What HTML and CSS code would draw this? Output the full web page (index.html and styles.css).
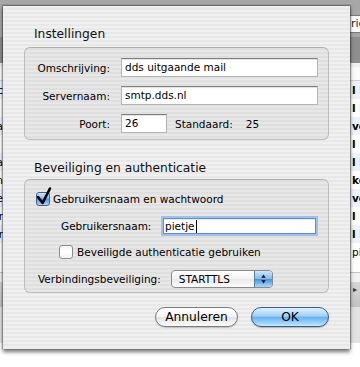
FILE: index.html
```html
<!DOCTYPE html>
<html lang="nl">
<head>
<meta charset="utf-8">
<title>Instellingen</title>
<link rel="stylesheet" href="styles.css">
</head>
<body>
<div class="window">
  <div class="toolbar"><div class="search">ric</div></div>
  <div class="bar-dark"></div>
  <div class="colhead"></div>
  <ul class="list">
    <li class="alt"><span class="lc">c</span><span class="mid"></span><span class="rc b">l L</span></li>
    <li><span class="lc"></span><span class="mid"></span><span class="rc b">l L</span></li>
    <li class="alt"><span class="lc">a</span><span class="mid"></span><span class="rc b">ve</span></li>
    <li><span class="lc"></span><span class="mid"></span><span class="rc b">l L</span></li>
    <li class="alt"><span class="lc">a</span><span class="mid"></span><span class="rc b">l L</span></li>
    <li><span class="lc">n</span><span class="mid"></span><span class="rc b">ke</span></li>
    <li class="alt"><span class="lc">e</span><span class="mid"></span><span class="rc b">ve</span></li>
    <li><span class="lc">r</span><span class="mid"></span><span class="rc b">l L</span></li>
    <li class="alt"><span class="lc">r</span><span class="mid"></span><span class="rc b">l L</span></li>
    <li><span class="lc"></span><span class="mid"></span><span class="rc">pi</span></li>
  </ul>
  <div class="listend"></div>
  <div class="statusbar"><span class="tri">&#9656;</span></div>
  <div class="bottom"></div>
</div>

<div class="sheet">
  <h2 class="heading first">Instellingen</h2>
  <div class="group g1">
    <div class="row"><label class="lbl">Omschrijving:</label><div class="field wide">dds uitgaande mail</div></div>
    <div class="row"><label class="lbl">Servernaam:</label><div class="field wide">smtp.dds.nl</div></div>
    <div class="row"><label class="lbl">Poort:</label><div class="field port">26</div><span class="std">Standaard:</span><span class="stdv">25</span></div>
  </div>

  <h2 class="heading second">Beveiliging en authenticatie</h2>
  <div class="group g2">
    <div class="check-row">
      <svg class="cb" width="14" height="14" viewBox="0 0 14 14" overflow="visible">
        <defs>
          <linearGradient id="cbg" x1="0" y1="0" x2="0" y2="1">
            <stop offset="0" stop-color="#d3e9fc"/>
            <stop offset=".45" stop-color="#86bdf0"/>
            <stop offset=".5" stop-color="#4f95e0"/>
            <stop offset="1" stop-color="#b2ddfc"/>
          </linearGradient>
        </defs>
        <rect x=".5" y=".5" width="13" height="13" rx="2.5" fill="url(#cbg)" stroke="#42638f"/>
        <path d="M2 5 L6.6 11 L14 -3.5" fill="none" stroke="#000" stroke-width="2.6" stroke-linecap="round" stroke-linejoin="round"/>
      </svg>
      <span>Gebruikersnaam en wachtwoord</span>
    </div>
    <div class="user-row"><label>Gebruikersnaam:</label><div class="field focus">pietje<span class="caret"></span></div></div>
    <div class="check-row sub">
      <svg class="cb" width="14" height="14" viewBox="0 0 14 14">
        <defs>
          <linearGradient id="cbw" x1="0" y1="0" x2="0" y2="1">
            <stop offset="0" stop-color="#f4f4f4"/>
            <stop offset=".5" stop-color="#ffffff"/>
            <stop offset="1" stop-color="#f2f2f2"/>
          </linearGradient>
        </defs>
        <rect x=".5" y=".5" width="13" height="13" rx="2.5" fill="url(#cbw)" stroke="#8c8c8c"/>
      </svg>
      <span>Beveiligde authenticatie gebruiken</span>
    </div>
    <div class="conn-row">
      <label>Verbindingsbeveiliging:</label>
      <div class="popup">
        <span class="ptext">STARTTLS</span>
        <svg class="arrows" width="18" height="18" viewBox="0 0 18 18">
          <polygon points="9,4 11.5,7.5 6.5,7.5" fill="#111"/>
          <polygon points="9,14 11.5,10.5 6.5,10.5" fill="#111"/>
        </svg>
      </div>
    </div>
  </div>

  <div class="buttons">
    <button class="btn cancel">Annuleren</button>
    <button class="btn ok">OK</button>
  </div>
</div>
</body>
</html>
```
FILE: styles.css
```css
* { box-sizing: border-box; margin: 0; padding: 0; }
html, body { width: 360px; height: 367px; overflow: hidden; background: #fff; }
body {
  position: relative;
  font-family: "DejaVu Sans", "Liberation Sans", sans-serif;
  font-size: 10.5px;
  color: #000;
}

/* background window */
.window { display: flex; flex-direction: column; height: 367px; }
.toolbar {
  height: 37px;
  background: #a7a7a7;
  display: flex;
  justify-content: flex-end;
  padding-top: 15px;
}
.search {
  width: 40px; height: 18px;
  background: #fff;
  border: 1px solid #7a7a7a; border-right: 0;
  padding-left: 30px;
  font-size: 11px; line-height: 16px;
  overflow: hidden; white-space: nowrap;
  color: #222;
}
.bar-dark { height: 26px; background: #8e8e8e; }
.colhead { height: 18px; background: #fbfbfb; border-top: 4px solid #f0f0f0; border-bottom: 1px solid #d2d2d2; }
.list { list-style: none; }
.list li {
  height: 18px;
  display: grid;
  grid-template-columns: 3px 1fr 8px;
  background: #fff;
  line-height: 18px;
  font-size: 10.5px;
  white-space: nowrap;
  overflow: hidden;
}
.list li.alt { background: #edf3fe; }
.lc { overflow: hidden; direction: rtl; }
.rc { overflow: hidden; }
.rc.b { font-weight: bold; }
.listend { height: 12px; background: #fff; border-bottom: 1px solid #c4c4c4; }
.statusbar {
  height: 34px;
  background: linear-gradient(#d6d6d6, #c2c2c2);
  border-top: 9px solid #f2f2f2;
  display: flex; justify-content: flex-end;
  padding-right: 3px;
  font-size: 8px; line-height: 16px; color: #333;
}
.bottom { height: 36px; background: #e2e2e2; }

/* sheet */
.sheet {
  position: absolute;
  left: 3px; top: 5px;
  width: 347px; height: 344px;
  padding: 21px 21px 0;
  border-top: 1px solid #6e6e6e;
  background: repeating-linear-gradient(#f0f0f0 0 2px, #e8e8e8 2px 4px);
  box-shadow: 0 3px 4px rgba(0,0,0,.55), -1px 0 1px rgba(0,0,0,.25), 1px 0 1px rgba(0,0,0,.25);
  display: flex;
  flex-direction: column;
}
.heading {
  font-size: 12.25px;
  line-height: 15px;
  font-weight: normal;
  margin-left: 10px;
  color: #111;
}
.heading.first { margin-bottom: 5px; }
.heading.second { margin-top: 21px; margin-bottom: 3px; }

.group {
  border: 1px solid #bcbcbc;
  border-top-color: #b0b0b0;
  border-radius: 6px;
  background: rgba(0,0,0,.035);
}
.g1 {
  padding: 10px 10px 6px 0;
  display: flex; flex-direction: column; gap: 9px;
}
.g1 .row { display: flex; align-items: center; height: 19px; }
.g1 .lbl { width: 85px; text-align: right; margin-right: 11px; }

.field {
  height: 19px;
  background: #fff;
  border: 1px solid #b4b4b4;
  border-top-color: #7e7e7e;
  box-shadow: inset 0 1px 1px rgba(0,0,0,.12);
  padding-left: 3px;
  line-height: 17px;
  white-space: nowrap;
}
.field.wide { flex: 1; }
.field.port { width: 46px; }
.std { margin-left: 8px; }
.stdv { margin-left: 13px; }

.g2 {
  padding: 12px 10px 4px 0;
  display: flex; flex-direction: column;
}
.check-row {
  display: flex; align-items: center;
  height: 14px;
  gap: 3px;
  padding-left: 11px;
  line-height: 14px;
}
.check-row.sub { padding-left: 34px; margin-top: 9px; gap: 4px; }
.cb { flex: none; display: block; }

.user-row {
  margin-top: 10px;
  height: 20px;
  display: flex; align-items: center;
  padding-left: 36px;
}
.field.focus {
  margin-left: auto;
  margin-right: 2px;
  width: 153px;
  height: 16px;
  line-height: 14px;
  border: 1px solid #5f8fcc;
  box-shadow: 0 0 0 2px #9fc2ec, inset 0 1px 1px rgba(0,0,0,.1);
  padding-left: 1px;
  display: flex; align-items: center;
}
.caret {
  display: inline-block;
  width: 1px; height: 13px;
  background: #000;
  margin-left: 1px;
}

.conn-row {
  margin-top: 11px;
  height: 18px;
  display: flex; align-items: center;
  gap: 10px;
  padding-left: 13px;
}
.popup {
  width: 102px; height: 18px;
  display: flex; align-items: center;
  border: 1px solid #8a8a8a;
  border-radius: 4px;
  background: linear-gradient(#ffffff, #f3f3f3 50%, #e9e9e9 51%, #fdfdfd);
  overflow: hidden;
}
.ptext { flex: 1; padding-left: 7px; line-height: 16px; }
.arrows {
  flex: none;
  width: 18px; height: 16px;
  background: linear-gradient(#cfe6fb, #84bbef 48%, #4b92df 52%, #a9dafd);
  border-left: 1px solid #5a7ea8;
}

.buttons {
  display: flex;
  justify-content: flex-end;
  gap: 13px;
  margin-top: 14px;
}
.btn {
  height: 20px;
  border-radius: 10px;
  font-family: "DejaVu Sans", "Liberation Sans", sans-serif;
  font-size: 12.25px;
  line-height: 18px;
  color: #000;
  text-align: center;
}
.btn.cancel {
  width: 83px;
  border: 1px solid #7b7b7b;
  background: linear-gradient(#ffffff, #f4f4f4 48%, #e3e3e3 52%, #fbfbfb);
  box-shadow: 0 1px 1px rgba(0,0,0,.2);
}
.btn.ok {
  width: 78px;
  border: 1px solid #3f5a7e;
  background: linear-gradient(#e0f0fd, #9fd0f6 45%, #6cb2ee 52%, #9fd6fb 85%, #c6ecfe);
  box-shadow: 0 1px 1px rgba(0,0,0,.25);
}
```
